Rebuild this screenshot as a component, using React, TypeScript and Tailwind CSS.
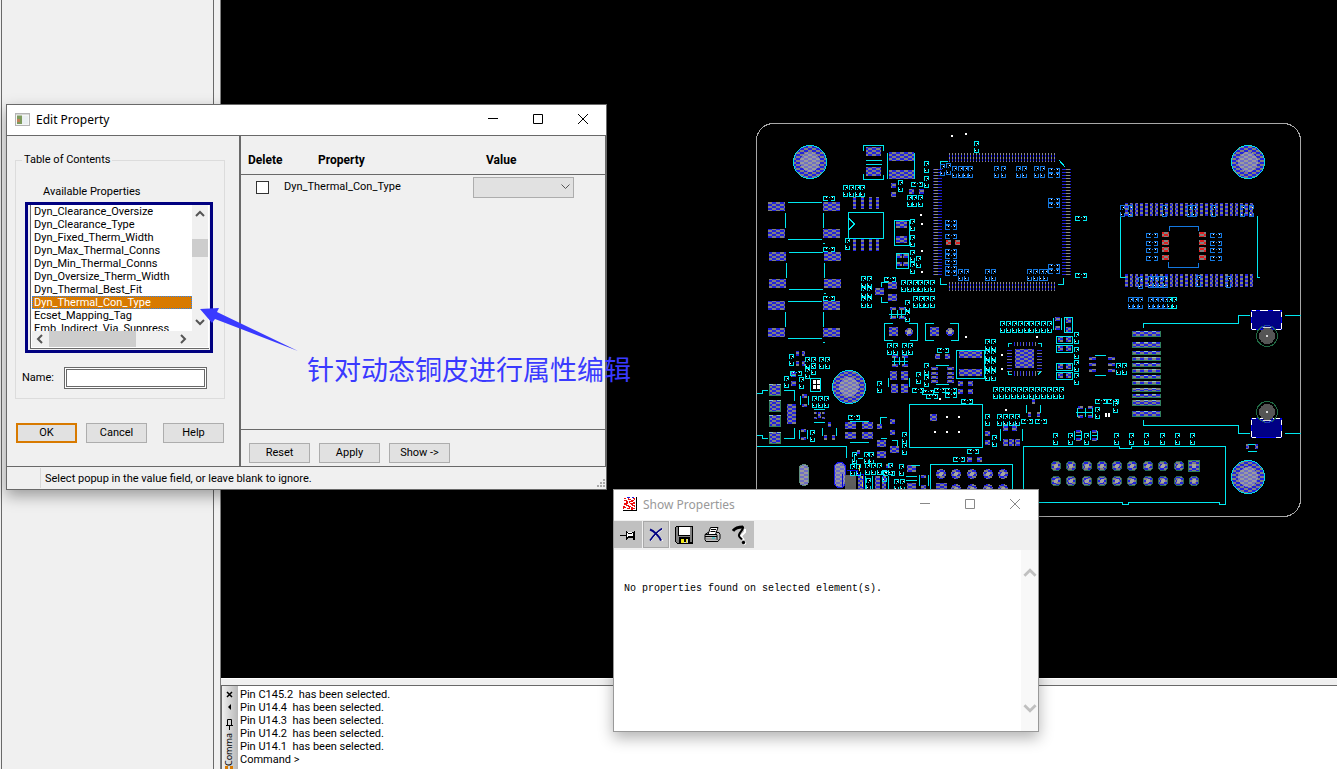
import React from "react";

type XY = [number, number];
type Box = [number, number, number, number];

const range = (n: number) => Array.from({ length: n }, (_, i) => i);

// Upright two-pad parts, 5 x 12
const uprightCyan: XY[] = [
  [924, 161], [924, 176], [898, 180], [907, 195], [912, 195], [918, 195], [843, 185], [849, 185], [855, 185], [860, 185],
  [845, 238], [910, 219], [910, 235], [910, 250], [916, 256], [910, 262], [861, 276], [867, 276], [861, 286], [867, 286],
  [861, 296], [867, 296], [901, 280], [907, 280], [913, 280], [918, 280], [924, 280], [930, 280], [913, 296], [919, 296],
  [924, 296], [930, 296], [905, 300], [905, 310], [887, 343], [893, 343], [902, 343], [908, 343], [916, 372], [924, 363],
  [924, 375], [789, 354], [805, 357], [811, 357], [805, 367], [811, 363], [819, 357], [825, 357], [784, 376], [799, 377],
  [877, 381], [812, 396], [818, 396], [824, 396], [810, 430], [902, 432], [902, 443], [899, 464], [894, 479], [900, 479],
  [852, 452], [864, 452], [869, 452], [850, 464], [856, 464], [865, 463], [871, 463], [877, 463], [882, 470], [866, 478],
  [888, 463], [1074, 332], [1074, 347], [1074, 360], [1074, 373], [985, 414], [992, 435], [997, 414], [1003, 414], [1009, 414],
  [1015, 414], [1116, 363], [1122, 363], [1095, 407], [1113, 401], [1053, 433], [1068, 433], [1084, 433], [1114, 433],
  [1129, 433], [1144, 433], [1160, 433], [1175, 433], [1190, 433], [974, 141], [1167, 297], [1172, 297],
  ...range(9).map((i): XY => [1000 + i * 6 - (i > 4 ? 1 : 0), 321]),
  ...range(12).map((i): XY => [993 + i * 6, 387]),
  ...range(4).flatMap((i): XY[] => [[985, 339 + i * 10], [991, 339 + i * 10]]),
];

// Flat two-pad parts, 12 x 5
const flatCyan: XY[] = [
  [911, 182], [823, 196], [823, 247], [823, 296], [884, 277], [848, 415], [937, 348], [912, 388], [922, 390], [934, 388],
  [945, 388], [926, 394], [945, 393], [961, 399], [1021, 419], [1035, 419], [967, 449], [953, 457], [1095, 399], [1107, 399],
  [1075, 216], [1075, 273], [883, 471], [790, 371],
];

const uprightBlue: XY[] = [
  [940, 164], [946, 163], [952, 166], [958, 166], [963, 166], [968, 166], [994, 166], [1001, 166], [1016, 166], [1022, 166],
  [1034, 166], [1040, 166], [958, 269], [964, 269], [985, 269], [991, 269], [1027, 269], [1033, 269], [1039, 269], [1043, 269],
  [1120, 205], [1128, 205], [1162, 205], [1187, 205], [1192, 205], [1211, 205], [1240, 205], [1249, 205], [1138, 277],
  [1148, 276], [1153, 276], [1158, 276], [1163, 276], [1196, 275], [1226, 276], [1128, 297], [1133, 297], [1138, 297],
  [1148, 297], [1153, 297], [1158, 297], [1163, 297],
];

const flatBlue: XY[] = [
  [1048, 168], [1048, 173], [1048, 198], [1048, 203], [1048, 264], [1048, 269], [945, 220], [945, 225], [945, 234],
  [945, 249], [945, 254], [945, 260], [945, 266], [945, 271],
  ...[233, 241, 248, 256].flatMap((y): XY[] => [[1146, y], [1210, y]]),
];

const inductors: XY[] = [[768, 202], [769, 252], [768, 301]];

const pads: Box[] = [
  ...inductors.flatMap(([x, y]): Box[] => [[x, y, 17, 9], [x + 55, y, 17, 9], [x, y + 27, 17, 9], [x + 55, y + 27, 17, 9]]),
  [866, 147, 15, 9], [866, 167, 15, 9], [889, 152, 25, 9], [889, 170, 25, 9], [891, 183, 5, 5], [891, 192, 5, 5],
  [909, 189, 5, 5], [919, 189, 5, 5], [896, 221, 11, 7], [896, 236, 11, 7], [897, 254, 5, 4], [903, 254, 5, 4],
  [897, 262, 5, 4], [903, 262, 5, 4], [875, 288, 9, 7], [888, 282, 9, 7], [888, 294, 9, 7],
  ...[853, 861, 869, 876].flatMap((x): Box[] => [[x, 197, 3, 12], [x, 239, 3, 12]]),
  [890, 307, 6, 3], [899, 307, 6, 3], [890, 316, 6, 3], [899, 316, 6, 3], [889, 327, 9, 9], [930, 327, 9, 9],
  [892, 355, 6, 3], [902, 355, 6, 3], [892, 364, 6, 3], [902, 364, 6, 3], [890, 371, 7, 9], [901, 371, 7, 9],
  [891, 384, 7, 9], [901, 384, 7, 9],
  ...[367, 372, 376, 380].flatMap((y): Box[] => [[931, y, 7, 3], [947, y, 7, 3]]),
  [796, 351, 3, 5], [802, 351, 3, 5], [796, 361, 3, 5], [802, 361, 3, 5], [791, 372, 5, 5], [791, 381, 5, 5],
  [787, 404, 9, 20], [802, 394, 5, 4], [802, 404, 5, 3], [814, 412, 3, 2], [818, 412, 3, 6], [822, 412, 3, 2],
  [814, 417, 3, 2], [822, 417, 3, 2], [828, 422, 3, 5], [824, 435, 3, 5], [832, 435, 3, 5], [801, 429, 5, 3],
  [801, 437, 5, 3], [845, 422, 11, 7], [862, 422, 11, 7], [845, 432, 11, 7], [862, 432, 11, 7], [877, 424, 5, 5],
  [890, 419, 5, 5], [890, 430, 5, 5], [877, 440, 9, 7], [877, 451, 9, 7], [890, 446, 9, 7], [907, 465, 9, 7],
  [907, 483, 9, 7], [921, 475, 5, 3], [921, 485, 5, 4], [875, 476, 5, 13], [882, 476, 4, 13], [886, 464, 4, 4],
  [858, 476, 5, 13], [857, 450, 3, 4],
  [930, 414, 7, 7], [1055, 317, 5, 4], [1055, 326, 5, 4], [1066, 318, 5, 5], [1066, 327, 5, 5],
  ...[337, 346, 364, 373].flatMap((y): Box[] => [[1058, y, 5, 5], [1066, y, 5, 5]]),
  [1015, 349, 19, 19], [959, 351, 23, 7], [959, 369, 23, 7], [935, 354, 5, 5], [945, 354, 5, 5], [958, 381, 5, 5],
  [968, 381, 5, 5], [958, 389, 5, 5], [968, 389, 5, 5], [1032, 399, 3, 5], [1028, 412, 3, 5], [1037, 412, 3, 5],
  [1003, 424, 5, 7], [1012, 424, 5, 7], [1003, 439, 5, 7], [1009, 439, 5, 7], [1015, 439, 5, 7], [985, 431, 5, 5],
  [985, 440, 5, 5], [967, 457, 5, 5], [977, 457, 5, 5],
  ...[357, 363, 369].flatMap((y): Box[] => [[1089, y, 7, 3], [1108, y, 7, 3]]),
  [1078, 406, 5, 3], [1078, 415, 5, 3], [1088, 406, 5, 3], [1088, 415, 5, 3], [1076, 430, 5, 3], [1076, 438, 5, 3],
  [1092, 430, 5, 3], [1092, 438, 5, 3], [1246, 444, 3, 5], [1255, 444, 3, 5], [1188, 460, 12, 12], [936, 483, 11, 8],
  ...range(26).flatMap((i): Box[] => [[1125 + i * 5, 203, 3, 13], [1125 + i * 5, 274, 3, 13]]),
];

const edgePads: Box[] = [
  ...[331, 342].map((y): Box => [1132, y, 29, 6]),
  ...[351, 357, 363, 369, 375, 381, 388, 394].map((y): Box => [1132, y, 29, 4]),
  ...[400, 411].map((y): Box => [1132, y, 29, 6]),
  ...[384, 400, 415, 432].map((y): Box => [769, y, 12, 12]),
];

const redPads: Box[] = [
  ...[232, 240, 247, 255].flatMap((y): Box[] => [[1162, y, 7, 5], [1199, y, 7, 5]]),
  [946, 240, 5, 5], [955, 240, 5, 5],
];

const dots: XY[] = [
  [920, 214], [921, 223], [921, 250], [921, 271], [951, 135], [965, 133], [965, 336], [1036, 336], [1001, 354],
  [1001, 368], [939, 398], [1005, 409], [946, 416], [958, 416], [934, 431], [946, 431], [958, 431],
];

const holes: XY[] = [[810, 162], [849, 387], [1248, 162], [1248, 477]];

const roundPins: [number, number, number][] = [
  [909, 332, 4], [950, 332, 4],
  ...[1056, 1071, 1087, 1102, 1117, 1132, 1148, 1163, 1179].map((x): [number, number, number] => [x, 466, 5]),
  ...[1056, 1071, 1087, 1102, 1117, 1132, 1148, 1163, 1179, 1194].map((x): [number, number, number] => [x, 481, 5]),
  ...[941, 956, 972, 988, 1003].map((x): [number, number, number] => [x, 474, 5]),
  ...[956, 972, 988, 1003].map((x): [number, number, number] => [x, 489, 5]),
];

const uprightPath = (list: XY[]) =>
  list.map(([x, y]) => `M${x + 0.5} ${y + 5}v-4.5h4v3M${x + 0.5} ${y + 7}v4.5h4v-4M${x + 2} ${y + 4.5}h1`).join("");
const flatPath = (list: XY[]) =>
  list.map(([x, y]) => `M${x + 5} ${y + 0.5}h-4.5v4h4M${x + 8} ${y + 0.5}h3.5v4h-4M${x + 6} ${y + 1.5}h1`).join("");
const dotPath = (up: XY[], flat: XY[]) =>
  up.map(([x, y]) => `M${x + 3} ${y + 2}h1v1h-1zM${x + 1} ${y + 9}h1v1h-1z`).join("") +
  flat.map(([x, y]) => `M${x + 3} ${y + 1}h1v1h-1zM${x + 9} ${y + 1}h1v1h-1z`).join("");
const boxPath = (list: Box[]) => list.map(([x, y, w, h]) => `M${x} ${y}h${w}v${h}h${-w}z`).join("");
const inductorPath = inductors
  .map(([x, y]) => `M${x + 20} ${y + 0.5}h34M${x + 20} ${y + 37.5}h34M${x + 17.5} ${y + 11}v15M${x + 55.5} ${y + 11}v15M${x + 55} ${y + 41.5}h2`)
  .join("");

const cyanLines = [
  "M863.5 151v-5.5h20v5M863.5 174v5.5h20v-5M866 160.5h16M866 164.5h16M887.5 153v26M914.5 153v26",
  "M848.5 212.5h35v26h-35zM848.5 218l6 6l-6 6M894.5 220.5h15v25h-15zM896.5 253.5h12v15h-12zM888 282.5h-6.5v4M881.5 297v5.5h6",
  "M893 323.5h-8.5v17h8M909 323.5h8.5v17h-8M934 323.5h-8.5v17h8M950 323.5h8.5v17h-8",
  "M889 314h16M891.5 310v8M897.5 310v8M901.5 310v8M892 361h16M894.5 357v8M899.5 357v8M904.5 357v8M888.5 378v9M909.5 378v9",
  "M936 365.5h13M936 384.5h13M810.5 378.5h10v13h-10zM757 393.5h5v-3h6M784 390.5h10.5v10M757 435.5h5v3h6M784 438.5h10.5v-11",
  "M800.5 396v9M808.5 396v9M814 409.5h11M814 422.5h11M822.5 428v8M836.5 428v8M799.5 430v9M807.5 430v9",
  "M850 421.5h19M850 442.5h19M887 417.5h-6.5v6M881 438.5h6M892 440.5h5v5M757 446.5h89.5v11M854.5 462v-8M858 458.5h5",
  "M909.5 404.5h73v43h-73zM906 476.5h11M906 480.5h11M919.5 475v11M928.5 475v11M911 465.5h9M872.5 476v14M888.5 476v14M865.5 476v14",
  "M1053.5 318v12M1061.5 318v12M1064.5 317.5h8v15h-8z",
  "M1056.5 336.5h16v7h-16zM1056.5 345.5h16v7h-16zM1056.5 363.5h16v7h-16zM1056.5 372.5h16v7h-16z",
  "M1008.5 347v-3.5h3M1038 343.5h3.5v3M1008.5 371v3.5h3M1038 374.5l3-3M956.5 350.5h28v28h-28z",
  "M1076 412.5h17M1077.5 408v9M1085.5 408v9M1092.5 408v9M1074.5 431v9M1081.5 431v9M1090.5 431v9M1097.5 431v9M1076 435.5h5M1092 435.5h5",
  "M1026.5 405v8M1040.5 405v8M1000.5 429v12M1022.5 429v12M1095 355.5h11M1095 375.5h11",
  "M1023.5 503v-56.5H1119.5v2h12v-2H1225.5V504.5h-6v-2H1128v2h-6v-2H1038M930.5 490v-25.5h82v26",
  "M940.5 166v-4.5h7M1059 160l6 7M940.5 278v6.5h6M1063.5 278v6.5h-6M1120.5 213v64h5M1257.5 216v61h2",
  "M1143.5 328v-4.5H1238.5V315.5H1250M1285 315.5h16M1143.5 420v5.5H1238.5V433.5H1250M1285 433.5h16",
  "M1248 444.5h7M1248 451.5h9",
].join("");

function Board() {
  return (
    <svg className="block" width="1116" height="678" viewBox="221 0 1116 678" shapeRendering="crispEdges" fill="none" aria-label="Board layout">
      <defs>
        <pattern id="hatch" width="8" height="4" patternUnits="userSpaceOnUse">
          <rect width="8" height="4" fill="#808080" />
          <path d="M0 0h4v2h-4zM4 2h4v2h-4z" fill="#2121de" />
        </pattern>
        <pattern id="hatchRed" width="8" height="4" patternUnits="userSpaceOnUse">
          <rect width="8" height="4" fill="#808080" />
          <path d="M0 0h4v2h-4zM4 2h4v2h-4z" fill="#de2121" />
        </pattern>
        <pattern id="hatchPale" width="8" height="4" patternUnits="userSpaceOnUse">
          <rect width="8" height="4" fill="#9c9c9c" />
          <path d="M0 0h4v2h-4zM4 2h4v2h-4z" fill="#6f6fc8" />
        </pattern>
      </defs>

      <rect x="756.5" y="123.5" width="544" height="393" rx="17" stroke="#a8a8a8" />

      <path d={boxPath(pads)} fill="url(#hatch)" />
      <path d={boxPath(redPads)} fill="url(#hatchRed)" />
      {edgePads.map(([x, y, w, h]) => (
        <g key={`${x}-${y}`}>
          <rect x={x} y={y} width={w} height={h} fill="url(#hatch)" />
          <path d={`M${x + 0.5} ${y}v${h - 0.5}h${w - 1}v${-h}`} stroke="#2f8060" />
          <path d={w > 12 ? `M${x + 4} ${y + 0.5}h4m4 0h4m4 0h4` : `M${x} ${y + 0.5}h4m4 0h4`} stroke="#8fc4c4" />
        </g>
      ))}

      {range(36).map((i) => (
        <g key={i}>
          <path d={`M${949.5 + i * 3} 153v9M${949.5 + i * 3} 282v9M933 ${169.5 + i * 3}h9M1062 ${169.5 + i * 3}h9`} stroke="#2121de" />
          <path
            d={`M${949.5 + i * 3} 153v2m0 2v2m0 2v1M${949.5 + i * 3} 282v2m0 2v2m0 2v1M934 ${169.5 + i * 3}h4M1066 ${169.5 + i * 3}h4`}
            stroke="#8a8a8a"
          />
        </g>
      ))}
      {range(8).map((i) => (
        <path
          key={i}
          d={`M${1014.5 + i * 3} 342v4M${1014.5 + i * 3} 371v5M1007 ${350.5 + i * 3}h5M1037 ${350.5 + i * 3}h5`}
          stroke={i % 2 ? "#808080" : "#2121de"}
        />
      ))}

      {holes.map(([x, y]) => (
        <g key={`${x}-${y}`}>
          <circle cx={x} cy={y} r="16.5" fill="url(#hatch)" stroke="#00e0e8" />
          <circle cx={x} cy={y} r="10" fill="url(#hatchPale)" />
        </g>
      ))}

      {roundPins.map(([x, y, r]) => (
        <g key={`${x}-${y}`}>
          <circle cx={x} cy={y} r={r} fill="url(#hatch)" stroke={r === 5 && y !== 474 && y !== 489 ? "#2a6a58" : "none"} />
          <circle cx={x} cy={y} r="2" fill="#a4a4a4" />
        </g>
      ))}
      <rect x="1188.5" y="460.5" width="11" height="11" stroke="#2f8060" />
      <rect x="1192" y="464" width="4" height="4" fill="#a4a4a4" />

      <rect x="799.5" y="464.5" width="9" height="21" rx="4" fill="url(#hatchPale)" stroke="#5f9080" />
      <rect x="834.5" y="462.5" width="11" height="25" rx="5" fill="url(#hatchPale)" stroke="#1a1af0" />
      <rect x="845" y="475" width="11" height="15" fill="#606060" />
      <path d="M847 470.5h10v4h6v14M842 474v12" stroke="#0000e0" />
      <path d="M859.5 465v6M862.5 476v3m0 3v5" stroke="#e0e040" />

      <path d={uprightPath(uprightCyan) + flatPath(flatCyan) + inductorPath + cyanLines} stroke="#00e8f0" />
      <path d={uprightPath(uprightBlue) + flatPath(flatBlue)} stroke="#1478e0" />
      <path d="M1169.5 231v-4.500h29v4.500M1168.500 262v5.500h30v-5" stroke="#1478e0" />
      <path d={dotPath([...uprightCyan, ...uprightBlue], [...flatCyan, ...flatBlue])} fill="#fff" />
      <path d={dots.map(([x, y]) => `M${x} ${y}h2v2h-2z`).join("")} fill="#fff" />
      <path d="M813 380h3v4h-3zM817 380h3v4h-3zM813 385h3v4h-3zM817 385h3v4h-3zM1105 413h2v4h-2zM1108 413h2v4h-2z" fill="#fff" />

      {[310, 418].map((y) => (
        <g key={y}>
          <rect x="1251.5" y={y + 0.5} width="30" height="19" fill="#000084" stroke="#0000f0" />
          <path
            d={`M1251.500 ${y + 2}v5M1251.500 ${y + 13}v6M1281.500 ${y + 2}v5M1281.500 ${y + 13}v6M1252 ${y + 0.5}h4m4 0h8m5 0h7M1252 ${y + 19.5}h4m20 0h5`}
            stroke="#fff"
          />
        </g>
      ))}
      {[336, 412].map((cy) => (
        <g key={cy}>
          <circle cx="1267" cy={cy} r="10.5" stroke="#206a44" />
          <circle cx="1267" cy={cy} r="8" fill="#555" />
          <rect x="1266" y={cy - 1} width="2" height="2" fill="#d8d8d8" />
        </g>
      ))}
      <path d="M1260 329q7-7 14 0M1260 419q7 7 14 0" stroke="#2040c0" />
      <path d="M1263 328q4-2 8 0M1263 420q4 2 8 0" stroke="#d8d8d8" />
    </svg>
  );
}

const available = [
  "Dyn_Clearance_Oversize", "Dyn_Clearance_Type", "Dyn_Fixed_Therm_Width", "Dyn_Max_Thermal_Conns", "Dyn_Min_Thermal_Conns",
  "Dyn_Oversize_Therm_Width", "Dyn_Thermal_Best_Fit", "Dyn_Thermal_Con_Type", "Ecset_Mapping_Tag", "Emb_Indirect_Via_Suppress",
];

function Chevron({ dir, className }: { dir: "up" | "down" | "left" | "right"; className: string }) {
  const d = { up: "M1 7l4-4 4 4", down: "M1 3l4 4 4-4", left: "M7 1L3 5l4 4", right: "M3 1l4 4-4 4" }[dir];
  return (
    <svg className={className} viewBox="0 0 10 10" fill="none" stroke="currentColor" strokeWidth="2" aria-hidden="true">
      <path d={d} />
    </svg>
  );
}

function WindowButtons({ className }: { className: string }) {
  const glyphs: [string, string][] = [
    ["Minimize", "M0 4.5h10"],
    ["Maximize", "M.5 .5h9v9h-9z"],
    ["Close", "M0 0l10 10M10 0L0 10"],
  ];
  return (
    <div className={`ml-auto flex h-full pb-0.5 pr-px ${className}`}>
      {glyphs.map(([name, d]) => (
        <button key={name} type="button" aria-label={name} className="grid h-full w-[45px] place-items-center">
          <svg width="10" height="10" viewBox="0 0 10 10" fill="none" stroke="currentColor" className="overflow-visible">
            <path d={d} />
          </svg>
        </button>
      ))}
    </div>
  );
}

function PushButton({ children, primary = false }: { children: string; primary?: boolean }) {
  return (
    <button
      type="button"
      className={`h-5 w-[61px] bg-[#e1e1e1] text-center leading-4 ${primary ? "border-2 border-[#d87a00]" : "border border-[#adadad]"}`}
    >
      {children}
    </button>
  );
}

function PropertyList() {
  return (
    <div className="ml-[9px] mt-[3px] h-[151px] w-[188px] border-[3px] border-[#000080] bg-[#f0f0f0] pl-0.5">
      <div className="flex h-[144px] w-[179px] flex-col border-b border-l border-[#696969] bg-white pl-px">
        <div className="flex h-[126px]">
          <ul role="listbox" aria-label="Available Properties" className="w-[160px] overflow-hidden">
            {available.map((name) => (
              <li
                key={name}
                role="option"
                aria-selected={name === "Dyn_Thermal_Con_Type"}
                className={
                  name === "Dyn_Thermal_Con_Type"
                    ? "h-[13px] bg-[#d87a00] pl-0.5 leading-[13px] text-white outline-1 -outline-offset-1 outline-dotted outline-[#2785ff]"
                    : "h-[13px] pl-0.5 leading-[13px]"
                }
              >
                {name}
              </li>
            ))}
          </ul>
          <div className="flex w-4 flex-col items-center bg-[#f0f0f0] py-1 text-[#555]">
            <Chevron dir="up" className="size-2.5" />
            <div className="mt-5 h-[18px] w-full bg-[#cdcdcd]" />
            <Chevron dir="down" className="mt-auto size-2.5" />
          </div>
        </div>
        <div className="flex h-4 w-[176px] items-center bg-[#f0f0f0] pl-[3px] pr-5 text-[#555]">
          <Chevron dir="left" className="size-2.5" />
          <div className="ml-1 h-4 w-[87px] bg-[#cdcdcd]" />
          <Chevron dir="right" className="ml-auto size-2.5" />
        </div>
      </div>
    </div>
  );
}

function EditProperty() {
  return (
    <section className="absolute left-1.5 top-[104px] flex h-[386px] w-[601px] flex-col border border-[#696969] bg-[#f0f0f0] shadow-[0_6px_14px_rgba(0,0,0,0.35)]">
      <header className="flex h-[31px] shrink-0 items-center border-b border-[#696969] bg-white pl-2 font-['Noto_Sans','Open_Sans',sans-serif] text-xs">
        <svg width="15" height="13" viewBox="0 0 15 13" className="mb-0.5 mr-1.5" aria-hidden="true">
          <rect x=".5" y=".5" width="14" height="12" fill="#f4f6f6" stroke="#b4b4b4" />
          <path d="M1 1.500h13" stroke="#d8d8d8" />
          <rect x="2" y="2.500" width="5" height="8.500" fill="#7d9a5c" />
          <rect x="2" y="6" width="3" height="3" fill="#c08058" />
          <path d="M8 3v8M10 3v8M12 3v8" stroke="#dfe8ec" />
        </svg>
        <h1>Edit Property</h1>
        <WindowButtons className="text-black" />
      </header>

      <div className="flex min-h-0 flex-1">
        <div className="w-[234px] shrink-0 border-r-2 border-[#696969] pl-2">
          <fieldset className="mt-[17px] h-[246px] w-[210px] border border-[#dcdcdc]">
            <legend className="ml-1.5 px-0.5 leading-[14px]">Table of Contents</legend>
            <p className="mt-[18px] pl-[27px] leading-[14px]">Available Properties</p>
            <PropertyList />
            <div className="mt-[14px] flex items-center pl-1.5">
              <label htmlFor="name" className="w-[42px]">Name:</label>
              <input id="name" className="h-[22px] w-[143px] border-[3px] border-double border-[#696969] bg-white px-1 outline-none" />
            </div>
          </fieldset>
          <div className="mt-6 flex w-[209px] pl-px">
            <PushButton primary>OK</PushButton>
            <div className="ml-[9px] mr-auto"><PushButton>Cancel</PushButton></div>
            <PushButton>Help</PushButton>
          </div>
        </div>

        <div className="flex min-w-0 flex-1 flex-col border-r border-[#696969]">
          <table className="w-full table-fixed text-left">
            <thead className="text-xs">
              <tr className="h-[38px] border-b border-[#696969]">
                <th className="w-[43px] whitespace-nowrap pl-[7px] pt-2.5 font-bold">Delete</th>
                <th className="w-[182px] pl-[34px] pt-2.5 font-bold">Property</th>
                <th className="pl-5 pt-2.5 font-bold">Value</th>
              </tr>
            </thead>
            <tbody>
              <tr className="h-[26px]">
                <td className="pl-[15px]">
                  <input
                    type="checkbox"
                    aria-label="Delete Dyn_Thermal_Con_Type"
                    className="block size-[13px] appearance-none border border-[#333] bg-white"
                  />
                </td>
                <td>Dyn_Thermal_Con_Type</td>
                <td className="pl-[7px]">
                  <div className="grid h-[21px] w-[101px] items-center">
                    <select aria-label="Value" className="col-start-1 row-start-1 h-full w-full appearance-none border border-[#adadad] bg-[#e1e1e1]">
                      <option></option>
                    </select>
                    <svg className="pointer-events-none col-start-1 row-start-1 mr-1 justify-self-end" width="9" height="6" fill="none" stroke="#555" aria-hidden="true">
                      <path d="M.5 .5l4 4 4-4" />
                    </svg>
                  </div>
                </td>
              </tr>
            </tbody>
          </table>
          <div className="mt-auto flex h-[37px] items-center gap-[9px] border-t border-[#696969] pl-2 pt-2.5">
            <PushButton>Reset</PushButton>
            <PushButton>Apply</PushButton>
            <PushButton>{"Show ->"}</PushButton>
          </div>
        </div>
      </div>

      <footer className="flex h-[23px] shrink-0 items-center border-t border-[#696969] pl-[33px]">
        <p className="h-5 border-l border-[#d8d8d8] pl-1 leading-[22px]">Select popup in the value field, or leave blank to ignore.</p>
        <svg className="mb-px ml-auto self-end" width="10" height="10" fill="#a8a8a8" aria-hidden="true">
          <path d="M7 1h2v2H7zM4 4h2v2H4zM7 4h2v2H7zM1 7h2v2H1zM4 7h2v2H4zM7 7h2v2H7z" />
        </svg>
      </footer>
    </section>
  );
}

function ToolButton({ label, className = "bg-[#c0c0c0] w-7", children }: { label: string; className?: string; children: React.ReactNode }) {
  return (
    <button type="button" aria-label={label} className={`grid h-[27px] place-items-center ${className}`}>
      {children}
    </button>
  );
}

function ShowProperties() {
  return (
    <section className="absolute left-[613px] top-[489px] flex h-[243px] w-[426px] flex-col border border-[#999] bg-white shadow-[0_6px_14px_rgba(0,0,0,0.3)]">
      <header className="flex h-[30px] shrink-0 items-center pl-[9px] font-['Noto_Sans','Open_Sans',sans-serif] text-xs text-[#999]">
        <svg width="14" height="14" viewBox="0 0 14 14" className="mb-0.5 mr-1.5" shapeRendering="crispEdges" aria-hidden="true">
          <path d="M0 1h13v12H0z" fill="#fff" />
          <path
            d="M1 1h2v1h-2zM5 1h1v1h2v1h-3zM10 1h2v2h-1v-1h-1zM1 3h3v1h1v1h-2v-1h-2zM6 4h2v-1h3v1h-1v1h-3v1h-1zM1 6h2v-1h2v2h-1v1h-3zM7 6h3v-1h2v2h-2v1h-2v-1h-1zM3 8h3v1h2v1h-3v-1h-2zM9 8h3v2h-1v-1h-2zM0 9h2v1h1v1h-2v1h-1zM4 11h2v-1h1v2h-3zM8 10h2v1h2v1h-2v1h-2z"
            fill="#ee1010"
          />
          <path d="M4 .5h3m2 0h2" stroke="#2020e0" />
          <path d="M13.500 0v14M0 13.500h14" stroke="#000" />
        </svg>
        <h2>Show Properties</h2>
        <WindowButtons className="text-[#888]" />
      </header>
      <div className="flex h-[30px] shrink-0 items-start bg-[#f0f0f0] pt-px">
        <ToolButton label="Pin">
          <svg width="16" height="12" viewBox="0 0 16 12" shapeRendering="crispEdges" fill="none" stroke="#000" aria-hidden="true">
            <path d="M7 3h7v6H7z" fill="#fff" stroke="none" />
            <path d="M0 6.500h6M6.500 2v9M7 3.500h1M8 4.500h4M12 3.500h1M7 8.500h6M7 9.500h1M14.500 2v9M13.500 2.500v8M8 7.500h5" />
          </svg>
        </ToolButton>
        <ToolButton label="Close" className="mx-px w-[26px] border border-[#a8a8a8] bg-[#c8c8c8]">
          <svg width="15" height="14" viewBox="0 0 15 14" fill="none" stroke="#000084" aria-hidden="true">
            <path d="M2 2.500C5 3 11 9 14 13M14 1C10 4 4 9 2 13" stroke="#fff" />
            <path d="M1 1.500C5 3 10 8 12 12.500" strokeWidth="2" />
            <path d="M13 .5C9 3 4 8 1 12.500" strokeWidth="1.500" />
          </svg>
        </ToolButton>
        <ToolButton label="Save">
          <svg width="18" height="18" viewBox="0 0 18 18" shapeRendering="crispEdges" aria-hidden="true">
            <path d="M1 0h16l1 1v16l-1 1H2l-2-2V1z" fill="#000" />
            <path d="M1 1h2v9h12V1h2v15h-2v-5H4v6H2l-1-1z" fill="#808080" />
            <path d="M4 1h11v8H4z" fill="#fff" />
            <path d="M6 13h7v4H6z" fill="#d8d8d8" />
            <path d="M6 13h3v4H6zM11 13h1v4h-1z" fill="#f0e818" />
            <path d="M9 13h2v3H9z" fill="#000" />
          </svg>
        </ToolButton>
        <ToolButton label="Print">
          <svg width="17" height="15" viewBox="0 0 17 15" fill="#fff" stroke="#000" aria-hidden="true">
            <path d="M1 7.500l3-2h11l1 2v4l-2 3H2l-1-2z" fill="#c0c0c0" />
            <path d="M4 7.500L6.500 .5H14l-2.500 7z" />
            <path d="M7 2.500h5M6.500 4.500h5M1 7.500h12M1 9.500h12M13 8v5" fill="none" />
            <path d="M2 12h11" stroke="#808080" />
            <path d="M8 11h3" stroke="#00d0d8" />
          </svg>
        </ToolButton>
        <ToolButton label="Help">
          <svg width="16" height="20" viewBox="0 0 16 20" fill="none" aria-hidden="true">
            <path d="M13 4v3l-4 4 3 4" stroke="#fff" strokeWidth="2" />
            <path d="M1 6C3 3 6 2 11 2" stroke="#000" strokeWidth="3" />
            <path d="M11 1.500C12 5 6 8 7 11c.5 1.500 2 2 3 3.500" stroke="#000" strokeWidth="2" />
            <circle cx="12.500" cy="18" r="1.700" fill="#fff" />
            <circle cx="11.500" cy="17.500" r="1.700" fill="#000" />
          </svg>
        </ToolButton>
      </div>
      <div className="flex min-h-0 flex-1">
        <p className="flex-1 pl-2.5 pt-8 font-['Liberation_Mono',monospace] text-[10px] leading-[14px] text-black">
          No properties found on selected element(s).
        </p>
        <div className="flex w-[17px] flex-col items-center justify-between bg-[#f8f8f8] pb-4 pt-4 text-[#c0c0c0]">
          <Chevron dir="up" className="size-3.5" />
          <Chevron dir="down" className="size-3.5" />
        </div>
      </div>
    </section>
  );
}

const log = [
  "Pin C145.2  has been selected.", "Pin U14.4  has been selected.", "Pin U14.3  has been selected.",
  "Pin U14.2  has been selected.", "Pin U14.1  has been selected.", "Command >",
];

export default function App() {
  return (
    <main className="relative flex h-screen overflow-hidden bg-[#f0f0f0] font-[Roboto,'Liberation_Sans',sans-serif] text-[11px] text-black">
      <aside className="flex w-[221px] shrink-0 border-r border-[#808080] pl-px">
        <div className="w-[213px] border-x border-[#696969] bg-[#f0f0f0]" />
      </aside>

      <div className="flex min-w-0 flex-1 flex-col">
        <div className="min-h-0 flex-1 overflow-hidden border-b border-white bg-black">
          <Board />
        </div>
        <div className="mt-1.5 flex h-[84px] shrink-0 border-l border-t border-[#696969] bg-white">
          <div className="flex w-4 flex-col items-center overflow-hidden bg-linear-to-r from-[#f0f0f0] to-[#b8b8b8] pr-0.5 pt-[5px]">
            <svg width="7" height="40" viewBox="0 0 7 40" fill="none" stroke="#000" className="shrink-0" aria-hidden="true">
              <path d="M1 1l5 5M6 1L1 6" strokeWidth="1.500" />
              <path d="M5 13v6l-3-3z" fill="#000" stroke="none" />
              <path d="M0 34.500h7M3.500 34v5M1.500 34v-5.500h4v5.500" />
            </svg>
            <span className="mt-auto rotate-180 font-['Noto_Sans',sans-serif] text-[9px] leading-[14px] [writing-mode:vertical-rl]">Comma</span>
            <span className="h-[3px] w-2 shrink-0 border-x-[3px] border-[#d87a00]" />
          </div>
          <div className="pl-0.5 pt-0.5">
            {log.map((line) => (
              <p key={line} className="whitespace-pre leading-[13px]">{line}</p>
            ))}
          </div>
        </div>
      </div>

      <EditProperty />
      <ShowProperties />

      <svg className="pointer-events-none absolute left-[200px] top-[306px]" width="100" height="46" fill="#3a3aff" aria-hidden="true">
        <path d="M0 3L19 2L17 6L98 45L15 13L12 17Z" />
      </svg>
      <p className="absolute left-[307px] top-[351px] whitespace-nowrap font-['Noto_Sans_CJK_SC',sans-serif] text-[27px] leading-9 text-[#3a3aff]">
        针对动态铜皮进行属性编辑
      </p>
    </main>
  );
}
